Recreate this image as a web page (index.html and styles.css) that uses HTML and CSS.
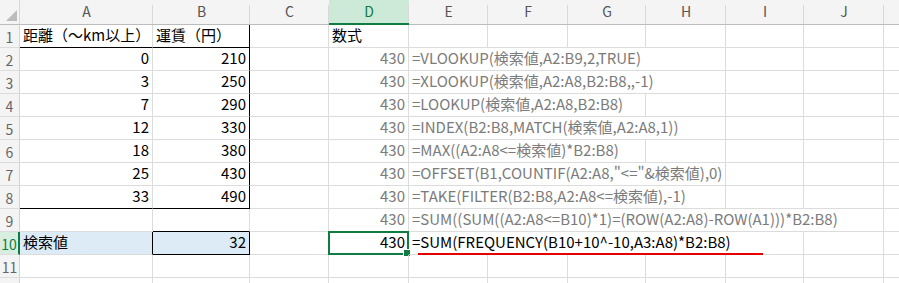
FILE: index.html
```html
<!DOCTYPE html>
<html lang="ja">
<head>
  <meta charset="UTF-8" />
  <title>検索値 - 運賃表</title>
  <link rel="stylesheet" href="styles.css">
</head>
<body>
  <div class="sheet">
    <!-- column headers -->
    <div class="hd corner">
      <svg class="corner-mark" width="11" height="11" viewBox="0 0 11 11"><polygon points="11,0 11,11 0,11" fill="#bcbcbc"/></svg>
    </div>
    <div class="hd col">A</div>
    <div class="hd col">B</div>
    <div class="hd col">C</div>
    <div class="hd col active">D</div>
    <div class="hd col">E</div>
    <div class="hd col">F</div>
    <div class="hd col">G</div>
    <div class="hd col">H</div>
    <div class="hd col">I</div>
    <div class="hd col">J</div>
    <div class="hd col edge"></div>

    <!-- row 1 -->
    <div class="hd row">1</div>
    <div class="c bb">距離（～km以上）</div>
    <div class="c bb br">運賃（円）</div>
    <div class="c"></div>
    <div class="c">数式</div>
    <div class="c"></div>
    <div class="c"></div>
    <div class="c"></div>
    <div class="c"></div>
    <div class="c"></div>
    <div class="c"></div>
    <div class="c edge"></div>

    <!-- row 2 -->
    <div class="hd row">2</div>
    <div class="c num">0</div>
    <div class="c num br">210</div>
    <div class="c"></div>
    <div class="c num fx">430</div>
    <div class="c fx span4">=VLOOKUP(検索値,A2:B9,2,TRUE)</div>
    <div class="c"></div>
    <div class="c"></div>
    <div class="c edge"></div>

    <!-- row 3 -->
    <div class="hd row">3</div>
    <div class="c num">3</div>
    <div class="c num br">250</div>
    <div class="c"></div>
    <div class="c num fx">430</div>
    <div class="c fx span4">=XLOOKUP(検索値,A2:A8,B2:B8,,-1)</div>
    <div class="c"></div>
    <div class="c"></div>
    <div class="c edge"></div>

    <!-- row 4 -->
    <div class="hd row">4</div>
    <div class="c num">7</div>
    <div class="c num br">290</div>
    <div class="c"></div>
    <div class="c num fx">430</div>
    <div class="c fx span3">=LOOKUP(検索値,A2:A8,B2:B8)</div>
    <div class="c"></div>
    <div class="c"></div>
    <div class="c"></div>
    <div class="c edge"></div>

    <!-- row 5 -->
    <div class="hd row">5</div>
    <div class="c num">12</div>
    <div class="c num br">330</div>
    <div class="c"></div>
    <div class="c num fx">430</div>
    <div class="c fx span4">=INDEX(B2:B8,MATCH(検索値,A2:A8,1))</div>
    <div class="c"></div>
    <div class="c"></div>
    <div class="c edge"></div>

    <!-- row 6 -->
    <div class="hd row">6</div>
    <div class="c num">18</div>
    <div class="c num br">380</div>
    <div class="c"></div>
    <div class="c num fx">430</div>
    <div class="c fx span3">=MAX((A2:A8&lt;=検索値)*B2:B8)</div>
    <div class="c"></div>
    <div class="c"></div>
    <div class="c"></div>
    <div class="c edge"></div>

    <!-- row 7 -->
    <div class="hd row">7</div>
    <div class="c num">25</div>
    <div class="c num br">430</div>
    <div class="c"></div>
    <div class="c num fx">430</div>
    <div class="c fx span4">=OFFSET(B1,COUNTIF(A2:A8,"&lt;="&amp;検索値),0)</div>
    <div class="c"></div>
    <div class="c"></div>
    <div class="c edge"></div>

    <!-- row 8 -->
    <div class="hd row">8</div>
    <div class="c num bb">33</div>
    <div class="c num bb br">490</div>
    <div class="c"></div>
    <div class="c num fx">430</div>
    <div class="c fx span4">=TAKE(FILTER(B2:B8,A2:A8&lt;=検索値),-1)</div>
    <div class="c"></div>
    <div class="c"></div>
    <div class="c edge"></div>

    <!-- row 9 -->
    <div class="hd row">9</div>
    <div class="c"></div>
    <div class="c bb"></div>
    <div class="c"></div>
    <div class="c num fx">430</div>
    <div class="c fx span6">=SUM((SUM((A2:A8&lt;=B10)*1)=(ROW(A2:A8)-ROW(A1)))*B2:B8)</div>
    <div class="c edge"></div>

    <!-- row 10 -->
    <div class="hd row active">10</div>
    <div class="c input br">検索値</div>
    <div class="c num input bb br">32</div>
    <div class="c"></div>
    <div class="c num current">430<span class="selection"></span></div>
    <div class="c span5 marked">=SUM(FREQUENCY(B10+10^-10,A3:A8)*B2:B8)</div>
    <div class="c"></div>
    <div class="c edge"></div>

    <!-- row 11 -->
    <div class="hd row">11</div>
    <div class="c"></div>
    <div class="c"></div>
    <div class="c"></div>
    <div class="c"></div>
    <div class="c"></div>
    <div class="c"></div>
    <div class="c"></div>
    <div class="c"></div>
    <div class="c"></div>
    <div class="c"></div>
    <div class="c edge"></div>

    <!-- row 12 (cut off) -->
    <div class="hd row"></div>
    <div class="c"></div>
    <div class="c"></div>
    <div class="c"></div>
    <div class="c"></div>
    <div class="c"></div>
    <div class="c"></div>
    <div class="c"></div>
    <div class="c"></div>
    <div class="c"></div>
    <div class="c"></div>
    <div class="c edge"></div>
  </div>
</body>
</html>
```

FILE: styles.css
```css
* {
  box-sizing: border-box;
}

html, body {
  margin: 0;
  padding: 0;
  background: #ffffff;
  overflow: hidden;
}

.sheet {
  display: grid;
  grid-template-columns: 20px 133px 97px 79px 80px 79px 80px 78px 80px 78px 80px 15px;
  grid-template-rows: 25px repeat(11, 23px) 6px;
  width: 899px;
  height: 283px;
  font-family: "Noto Sans CJK JP", "Noto Sans", sans-serif;
  font-size: 15px;
  color: #000;
}

/* headers */
.hd {
  background: #f4f4f4;
  color: #555;
  font-size: 14px;
  display: flex;
  align-items: center;
  justify-content: center;
  position: relative;
}

.hd.col {
  border-bottom: 1px solid #bcbcbc;
  padding-bottom: 2px;
}

.hd.col::after {
  content: "";
  position: absolute;
  top: 5px;
  bottom: 0;
  right: 0;
  width: 1px;
  background: #d8d8d8;
}

.hd.col.edge::after {
  display: none;
}

.hd.col.active {
  background: #cde9d7;
  color: #107c41;
  border-bottom: 2px solid #107c41;
}

.hd.corner {
  border-right: 1px solid #d8d8d8;
  border-bottom: 1px solid #bcbcbc;
}

.corner-mark {
  position: absolute;
  right: 2px;
  bottom: 3px;
}

.hd.row {
  border-right: 1px solid #d4d4d4;
  border-bottom: 1px solid #dcdcdc;
  color: #666;
  padding-top: 1px;
}

.hd.row.active {
  background: #d8eee0;
  color: #107c41;
  border-right: 2px solid #107c41;
}

/* cells */
.c {
  border-right: 1px solid #dcdcdc;
  border-bottom: 1px solid #dcdcdc;
  padding: 2px 3px 0 3px;
  line-height: 16px;
  white-space: nowrap;
  position: relative;
}

.c.edge {
  border-right: none;
}

.num {
  text-align: right;
}

.fx {
  color: #7b7b7b;
}

.bb {
  border-bottom-color: #000;
}

.br {
  border-right-color: #000;
}

.input {
  background: #ddebf7;
}

.span3 { grid-column: span 3; }
.span4 { grid-column: span 4; }
.span5 { grid-column: span 5; }
.span6 { grid-column: span 6; }

.selection {
  position: absolute;
  top: -1px;
  left: -1px;
  right: -1px;
  bottom: -1px;
  border: 2px solid #107c41;
}

.selection::after {
  content: "";
  position: absolute;
  right: -4px;
  bottom: -4px;
  width: 6px;
  height: 6px;
  background: #107c41;
  border: 1px solid #fff;
}

.marked::after {
  content: "";
  position: absolute;
  left: 9px;
  width: 345px;
  bottom: -1px;
  height: 2px;
  background: #e50000;
}
```
